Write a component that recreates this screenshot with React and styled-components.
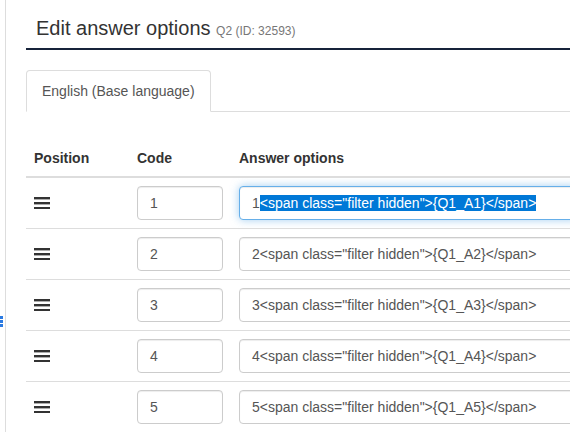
import React from "react";
import styled, { createGlobalStyle } from "styled-components";

const GlobalStyle = createGlobalStyle`
  html, body {
    margin: 0;
    padding: 0;
    background: #fff;
    overflow: hidden;
  }
  body {
    font-family: "Liberation Sans", Arial, sans-serif;
    font-size: 14px;
    color: #333;
  }
`;

const rows = [1, 2, 3, 4, 5];

const App = () => {
  return (
    <>
      <GlobalStyle />
      <Page>
        <SideMark>
          <i />
          <i />
          <i />
        </SideMark>
        <Heading>
          Edit answer options <small>Q2 (ID: 32593)</small>
        </Heading>
        <Tabs>
          <Tab>English (Base language)</Tab>
        </Tabs>
        <Table>
          <thead>
            <tr>
              <Th $w={87}>Position</Th>
              <Th $w={86}>Code</Th>
              <Th>Answer options</Th>
            </tr>
          </thead>
          <tbody>
            {rows.map((n) => (
              <tr key={n}>
                <Td>
                  <Bars viewBox="0 0 16 12" width="16" height="12">
                    <rect x="0" y="0" width="16" height="2.4" />
                    <rect x="0" y="5" width="16" height="2.4" />
                    <rect x="0" y="10" width="16" height="2.4" />
                  </Bars>
                </Td>
                <Td>
                  <Field>{n}</Field>
                </Td>
                <Td>
                  {n === 1 ? (
                    <Field $focused>
                      1<Selected>{'<span class="filter hidden">{Q1_A1}</span>'}</Selected>
                    </Field>
                  ) : (
                    <Field>{`${n}<span class="filter hidden">{Q1_A${n}}</span>`}</Field>
                  )}
                </Td>
              </tr>
            ))}
          </tbody>
        </Table>
      </Page>
    </>
  );
};

export default App;

const Page = styled.div`
  position: relative;
  margin-left: 5px;
  border-left: 1px solid #ddd;
  padding-left: 20px;
  min-height: 432px;
  box-sizing: border-box;
`;

const SideMark = styled.div`
  position: absolute;
  left: -6px;
  top: 316px;
  display: flex;
  flex-direction: column;
  gap: 1px;

  i {
    display: block;
    width: 3px;
    height: 3px;
    background: #2a7ae2;
  }
`;

const Heading = styled.h2`
  margin: 0;
  padding: 16px 0 8px 10px;
  font-size: 20px;
  font-weight: 400;
  line-height: 24px;
  color: #333;
  border-bottom: 2px solid #17233a;

  small {
    font-size: 12px;
    line-height: 1;
    color: #777;
  }
`;

const Tabs = styled.div`
  display: flex;
  margin-top: 20px;
  border-bottom: 1px solid #ddd;
`;

const Tab = styled.div`
  padding: 10px 15px;
  line-height: 20px;
  color: #555;
  border: 1px solid #ddd;
  border-bottom-color: transparent;
  border-radius: 4px 4px 0 0;
  margin-bottom: -1px;
  background: #fff;
`;

const Table = styled.table`
  margin-top: 28px;
  width: 560px;
  border-collapse: collapse;
  table-layout: fixed;
`;

const Th = styled.th`
  width: ${(p) => (p.$w ? `${p.$w}px` : "auto")};
  text-align: left;
  padding: 8px;
  line-height: 20px;
  font-size: 14px;
  font-weight: 700;
  color: #333;
  border-bottom: 2px solid #ddd;
`;

const Td = styled.td`
  padding: 8px;
  vertical-align: middle;
  border-bottom: 1px solid #ddd;
`;

const Bars = styled.svg`
  display: block;
  fill: #333;
`;

const Field = styled.div`
  box-sizing: border-box;
  height: 34px;
  padding: 6px 12px;
  line-height: 20px;
  font-size: 14px;
  color: #555;
  white-space: nowrap;
  overflow: hidden;
  background: #fff;
  border: 1px solid ${(p) => (p.$focused ? "#66afe9" : "#ccc")};
  border-radius: 4px;
  box-shadow: ${(p) =>
    p.$focused
      ? "inset 0 1px 1px rgba(0,0,0,.075), 0 0 8px rgba(102,175,233,.6)"
      : "inset 0 1px 1px rgba(0,0,0,.075)"};
`;

const Selected = styled.span`
  background: #0078d7;
  color: #fff;
`;
